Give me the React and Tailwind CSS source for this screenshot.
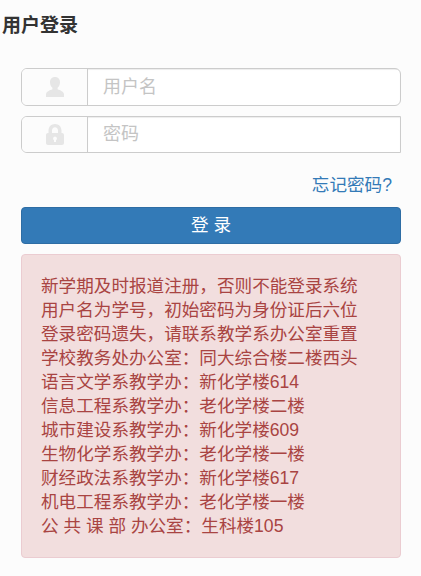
const lines = [
  '新学期及时报道注册，否则不能登录系统',
  '用户名为学号，初始密码为身份证后六位',
  '登录密码遗失，请联系教学系办公室重置',
  '学校教务处办公室：同大综合楼二楼西头',
  '语言文学系教学办：新化学楼614',
  '信息工程系教学办：老化学楼二楼',
  '城市建设系教学办：新化学楼609',
  '生物化学系教学办：老化学楼一楼',
  '财经政法系教学办：新化学楼617',
  '机电工程系教学办：老化学楼一楼',
  '公 共 课 部 办公室：生科楼105',
];

function UserIcon() {
  return (
    <svg width="18" height="20" viewBox="0 0 18 20" fill="#e6e6e6">
      <path d="M9 0c3.200 0 5 2.200 5 5.200 0 2.400-1 4.400-2.400 5.600v1.400c2.600 1 6.400 2.300 6.400 5.300V20H0v-2.500c0-3 3.800-4.300 6.400-5.300v-1.400C5 9.600 4 7.600 4 5.200 4 2.200 5.800 0 9 0z" />
    </svg>
  );
}

function LockIcon() {
  return (
    <svg width="18" height="21" viewBox="0 0 18 21" fill="#e6e6e6">
      <path d="M2.500 9V6.500C2.500 2.800 5.200 0 9 0s6.500 2.800 6.500 6.500V9h.5c1.200 0 2 .8 2 2v8c0 1.200-.8 2-2 2H2c-1.200 0-2-.8-2-2v-8c0-1.200.8-2 2-2h.5zm3.500 0h6V6.500C12 4.500 10.800 3.200 9 3.200S6 4.500 6 6.500V9zm3 3.500a2 2 0 0 0-1 3.700V18h2v-1.800a2 2 0 0 0-1-3.700z" fillRule="evenodd" />
    </svg>
  );
}

export default function App() {
  return (
    <div className="min-h-[576px] bg-[#fcfcfc] font-['Liberation_Sans','Noto_Sans_CJK_SC',sans-serif] text-[#333]">
      <h1 className="pl-[2px] pt-[14px] text-[19px] leading-[24px] font-bold">用户登录</h1>
      <form className="px-[21px] pt-[30px] w-[422px]">
        <div className="flex h-[38px] rounded-[6px] border border-[#ccc] bg-white overflow-hidden">
          <span className="flex w-[66px] items-center justify-center border-r border-[#ccc] bg-[#fcfcfc]">
            <UserIcon />
          </span>
          <input
            placeholder="用户名"
            className="flex-1 min-w-0 px-[15px] text-[18px] outline-none shadow-[inset_0_1px_1px_rgba(0,0,0,0.075)] placeholder:text-[#c4c4c4]"
          />
        </div>
        <div className="mt-[10px] flex h-[37px] rounded-l-[6px] border border-[#ccc] bg-white overflow-hidden">
          <span className="flex w-[66px] items-center justify-center border-r border-[#ccc] bg-[#fcfcfc]">
            <LockIcon />
          </span>
          <input
            placeholder="密码"
            className="flex-1 min-w-0 px-[15px] text-[18px] outline-none shadow-[inset_0_1px_1px_rgba(0,0,0,0.075)] placeholder:text-[#c4c4c4]"
          />
        </div>
        <div className="mt-[20px] pr-[9px] text-right text-[17.6px] leading-[24px]">
          <a href="#" className="text-[#337ab7]">忘记密码?</a>
        </div>
        <button
          type="button"
          className="mt-[10px] block h-[37px] w-full rounded-[4px] border border-[#2e6da4] bg-[#337ab7] text-[17.6px] text-white"
        >
          登 录
        </button>
        <div className="mt-[10px] h-[304px] rounded-[4px] border border-[#ebccd1] bg-[#f2dede] px-[19px] pt-[19px] text-[17.6px] leading-[24px] text-[#a94442]">
          {lines.map((line) => (
            <div key={line} className="whitespace-nowrap">{line}</div>
          ))}
        </div>
      </form>
    </div>
  );
}
